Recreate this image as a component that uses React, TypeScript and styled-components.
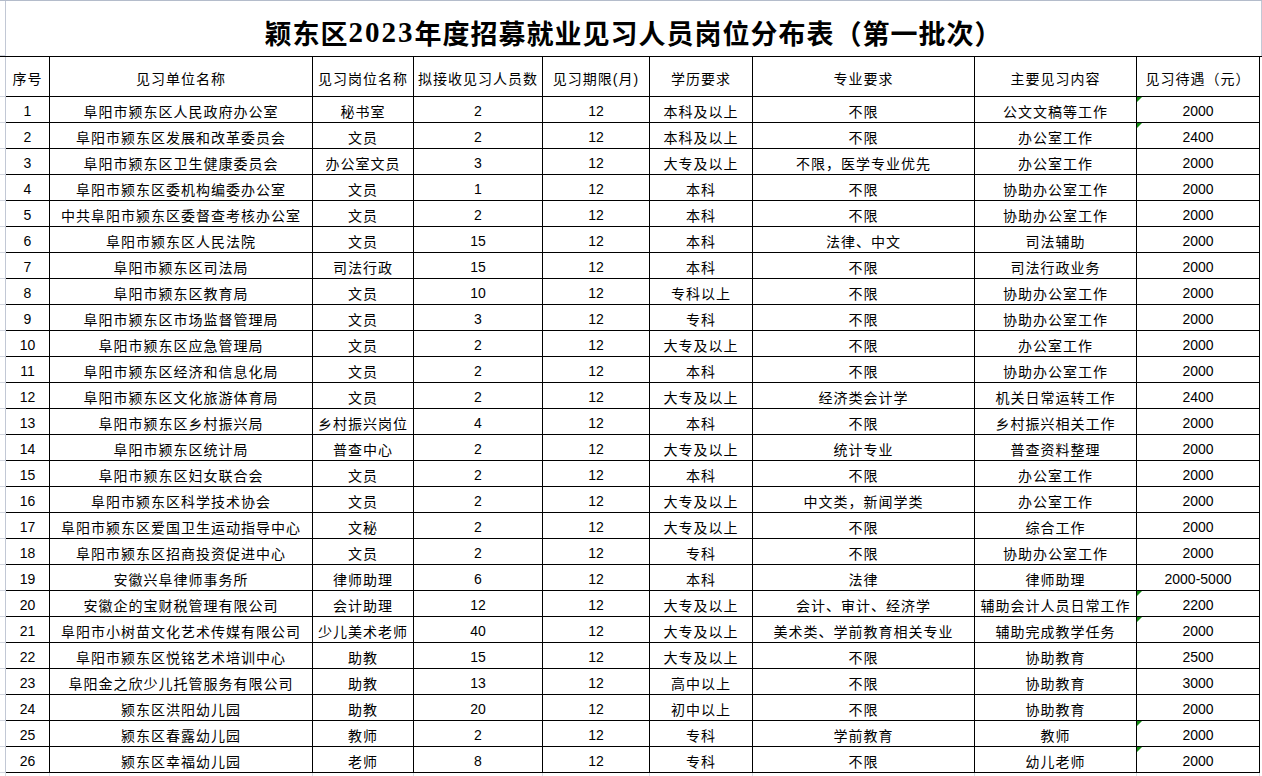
import React from "react";
import styled, { createGlobalStyle } from "styled-components";

const GlobalStyle = createGlobalStyle`
  html, body {
    margin: 0;
    padding: 0;
    background: #ffffff;
    overflow: hidden;
  }
  body {
    font-family: "Liberation Sans", "Noto Sans CJK SC", sans-serif;
    color: #000;
  }
`;

const COLS = "6px 44px 263px 101px 129px 107px 103px 222px 162px 123px 2px";

const Sheet = styled.div`
  width: 1262px;
  display: flex;
  flex-direction: column;
`;

const TitleRow = styled.div`
  display: grid;
  grid-template-columns: 6px 1fr;
  height: 57px;
  box-sizing: border-box;
  border-top: 1px solid #b4bccb;
  border-bottom: 1px solid #000;
`;

const Gutter = styled.div`
  border-right: 1px solid #c2c8d5;
  border-bottom: 1px solid #d3d7e0;
  box-sizing: border-box;
`;

const TitleCell = styled.div`
  display: flex;
  align-items: center;
  justify-content: center;
  padding-top: 7px;
  padding-left: 0;
  box-sizing: border-box;
  border-right: 1px solid #c2c8d5;
  font-family: "Noto Sans CJK SC", sans-serif;
  font-weight: 700;
  font-size: 27px;
  letter-spacing: 1px;
  white-space: nowrap;
`;

const TitleDigits = styled.span`
  font-family: "Liberation Serif", serif;
  font-weight: 700;
  font-size: 29px;
  letter-spacing: 2px;
`;

const Row = styled.div<{ $h: number }>`
  display: grid;
  grid-template-columns: ${COLS};
  height: ${(p) => p.$h}px;
`;

const Cell = styled.div<{ $num?: boolean }>`
  position: relative;
  display: flex;
  align-items: center;
  justify-content: center;
  box-sizing: border-box;
  border-right: 1px solid #000;
  border-bottom: 1px solid #000;
  padding-top: 2px;
  font-size: 14px;
  letter-spacing: ${(p) => (p.$num ? "0" : "1px")};
  white-space: nowrap;
  overflow: hidden;
`;

const Tail = styled.div`
  box-sizing: border-box;
`;

const Flag = styled.span`
  position: absolute;
  left: 0;
  top: 0;
  width: 0;
  height: 0;
  border-top: 5px solid #118a11;
  border-right: 5px solid transparent;
`;

const FillerRow = styled.div`
  display: grid;
  grid-template-columns: ${COLS};
  height: 20px;
`;

const FillerCell = styled.div`
  box-sizing: border-box;
  border-right: 1px solid #d8dce4;
`;

const headers = [
  "序号",
  "见习单位名称",
  "见习岗位名称",
  "拟接收见习人员数",
  "见习期限(月)",
  "学历要求",
  "专业要求",
  "主要见习内容",
  "见习待遇（元）",
];

type RowData = [string, string, string, string, string, string, string, string];

const rows: RowData[] = [
  ["阜阳市颍东区人民政府办公室", "秘书室", "2", "12", "本科及以上", "不限", "公文文稿等工作", "2000"],
  ["阜阳市颍东区发展和改革委员会", "文员", "2", "12", "本科及以上", "不限", "办公室工作", "2400"],
  ["阜阳市颍东区卫生健康委员会", "办公室文员", "3", "12", "大专及以上", "不限，医学专业优先", "办公室工作", "2000"],
  ["阜阳市颍东区委机构编委办公室", "文员", "1", "12", "本科", "不限", "协助办公室工作", "2000"],
  ["中共阜阳市颍东区委督查考核办公室", "文员", "2", "12", "本科", "不限", "协助办公室工作", "2000"],
  ["阜阳市颍东区人民法院", "文员", "15", "12", "本科", "法律、中文", "司法辅助", "2000"],
  ["阜阳市颍东区司法局", "司法行政", "15", "12", "本科", "不限", "司法行政业务", "2000"],
  ["阜阳市颍东区教育局", "文员", "10", "12", "专科以上", "不限", "协助办公室工作", "2000"],
  ["阜阳市颍东区市场监督管理局", "文员", "3", "12", "专科", "不限", "协助办公室工作", "2000"],
  ["阜阳市颍东区应急管理局", "文员", "2", "12", "大专及以上", "不限", "办公室工作", "2000"],
  ["阜阳市颍东区经济和信息化局", "文员", "2", "12", "本科", "不限", "协助办公室工作", "2000"],
  ["阜阳市颍东区文化旅游体育局", "文员", "2", "12", "大专及以上", "经济类会计学", "机关日常运转工作", "2400"],
  ["阜阳市颍东区乡村振兴局", "乡村振兴岗位", "4", "12", "本科", "不限", "乡村振兴相关工作", "2000"],
  ["阜阳市颍东区统计局", "普查中心", "2", "12", "大专及以上", "统计专业", "普查资料整理", "2000"],
  ["阜阳市颍东区妇女联合会", "文员", "2", "12", "本科", "不限", "办公室工作", "2000"],
  ["阜阳市颍东区科学技术协会", "文员", "2", "12", "大专及以上", "中文类，新闻学类", "办公室工作", "2000"],
  ["阜阳市颍东区爱国卫生运动指导中心", "文秘", "2", "12", "大专及以上", "不限", "综合工作", "2000"],
  ["阜阳市颍东区招商投资促进中心", "文员", "2", "12", "专科", "不限", "协助办公室工作", "2000"],
  ["安徽兴阜律师事务所", "律师助理", "6", "12", "本科", "法律", "律师助理", "2000-5000"],
  ["安徽企的宝财税管理有限公司", "会计助理", "12", "12", "大专及以上", "会计、审计、经济学", "辅助会计人员日常工作", "2200"],
  ["阜阳市小树苗文化艺术传媒有限公司", "少儿美术老师", "40", "12", "大专及以上", "美术类、学前教育相关专业", "辅助完成教学任务", "2000"],
  ["阜阳市颍东区悦铭艺术培训中心", "助教", "15", "12", "大专及以上", "不限", "协助教育", "2500"],
  ["阜阳金之欣少儿托管服务有限公司", "助教", "13", "12", "高中以上", "不限", "协助教育", "3000"],
  ["颍东区洪阳幼儿园", "助教", "20", "12", "初中以上", "不限", "协助教育", "2000"],
  ["颍东区春露幼儿园", "教师", "2", "12", "专科", "学前教育", "教师", "2000"],
  ["颍东区幸福幼儿园", "老师", "8", "12", "专科", "不限", "幼儿老师", "2000"],
];

const flagged = new Set([1, 2, 20, 21, 25, 26]);
const numericCols = new Set([2, 3, 7]);

export default function App() {
  return (
    <>
      <GlobalStyle />
      <Sheet>
        <TitleRow>
          <Gutter />
          <TitleCell>
            颖东区<TitleDigits>2023</TitleDigits>年度招募就业见习人员岗位分布表（第一批次）
          </TitleCell>
        </TitleRow>
        <Row $h={40}>
          <Gutter />
          {headers.map((h) => (
            <Cell key={h}>{h}</Cell>
          ))}
          <Tail />
        </Row>
        {rows.map((r, i) => (
          <Row $h={26} key={i}>
            <Gutter />
            <Cell $num>{i + 1}</Cell>
            {r.map((v, j) => (
              <Cell key={j} $num={numericCols.has(j)}>
                {j === 7 && flagged.has(i + 1) ? <Flag /> : null}
                {v}
              </Cell>
            ))}
            <Tail />
          </Row>
        ))}
        <FillerRow>
          <FillerCell />
          {headers.map((h) => (
            <FillerCell key={h} />
          ))}
          <Tail />
        </FillerRow>
      </Sheet>
    </>
  );
}
